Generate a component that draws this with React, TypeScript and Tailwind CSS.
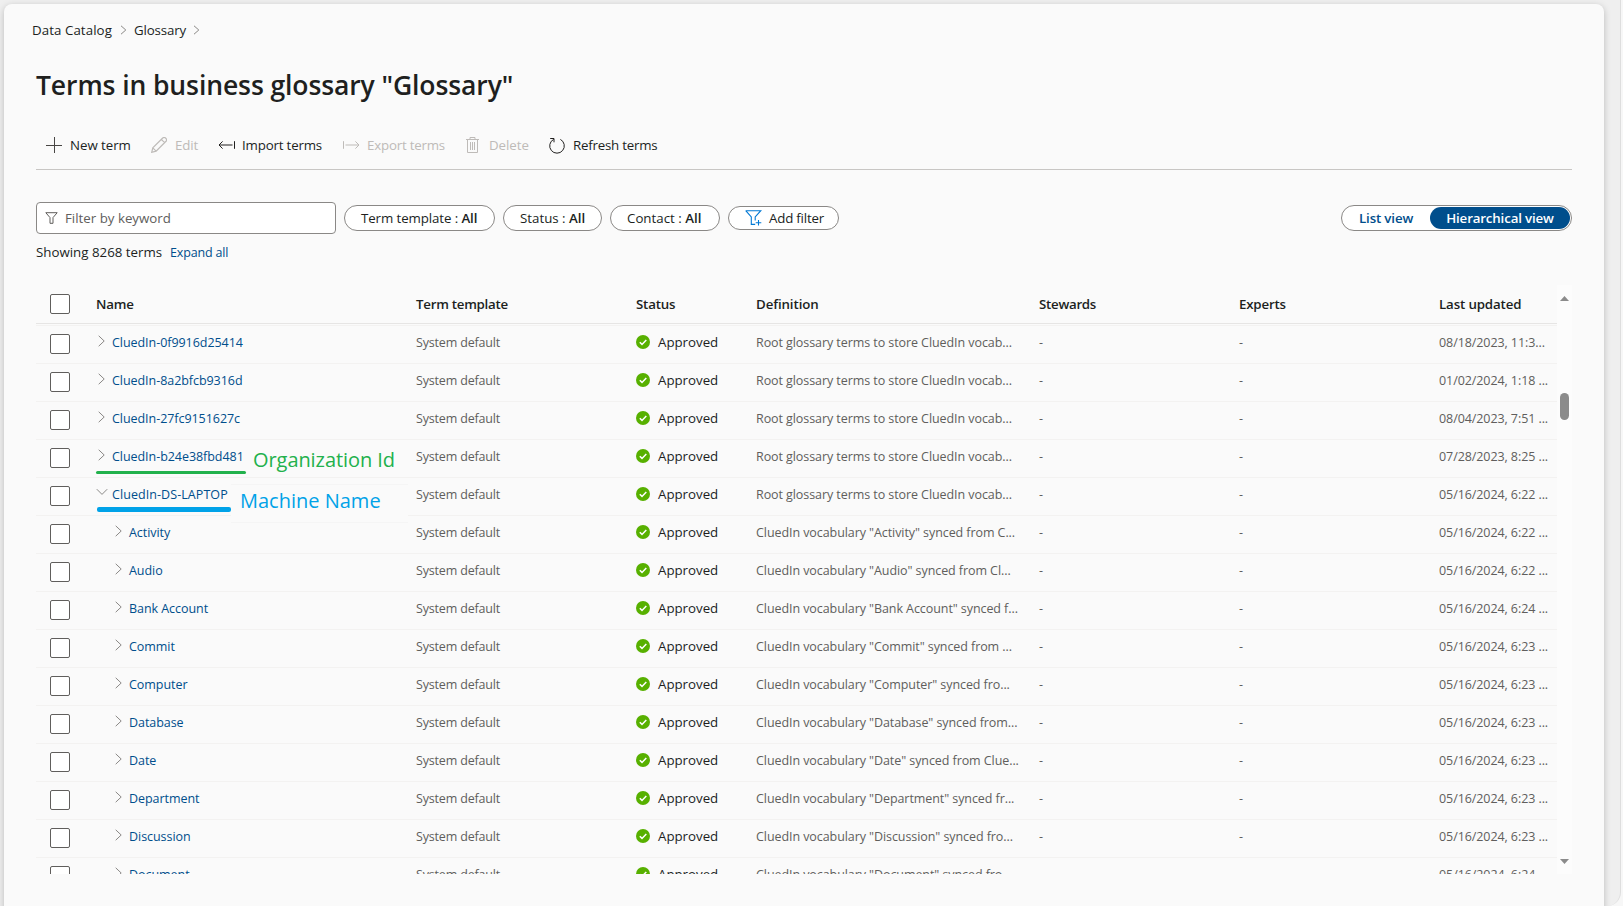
import type { ReactNode } from 'react';

type Term = { name: string; definition: string; updated: string; child?: boolean; open?: boolean };

const root = 'Root glossary terms to store CluedIn vocab...';

const terms: Term[] = [
  { name: 'CluedIn-0f9916d25414', definition: root, updated: '08/18/2023, 11:3...' },
  { name: 'CluedIn-8a2bfcb9316d', definition: root, updated: '01/02/2024, 1:18 ...' },
  { name: 'CluedIn-27fc9151627c', definition: root, updated: '08/04/2023, 7:51 ...' },
  { name: 'CluedIn-b24e38fbd481', definition: root, updated: '07/28/2023, 8:25 ...' },
  { name: 'CluedIn-DS-LAPTOP', definition: root, updated: '05/16/2024, 6:22 ...', open: true },
  { name: 'Activity', definition: 'CluedIn vocabulary "Activity" synced from C...', updated: '05/16/2024, 6:22 ...', child: true },
  { name: 'Audio', definition: 'CluedIn vocabulary "Audio" synced from Cl...', updated: '05/16/2024, 6:22 ...', child: true },
  { name: 'Bank Account', definition: 'CluedIn vocabulary "Bank Account" synced f...', updated: '05/16/2024, 6:24 ...', child: true },
  { name: 'Commit', definition: 'CluedIn vocabulary "Commit" synced from ...', updated: '05/16/2024, 6:23 ...', child: true },
  { name: 'Computer', definition: 'CluedIn vocabulary "Computer" synced fro...', updated: '05/16/2024, 6:23 ...', child: true },
  { name: 'Database', definition: 'CluedIn vocabulary "Database" synced from...', updated: '05/16/2024, 6:23 ...', child: true },
  { name: 'Date', definition: 'CluedIn vocabulary "Date" synced from Clue...', updated: '05/16/2024, 6:23 ...', child: true },
  { name: 'Department', definition: 'CluedIn vocabulary "Department" synced fr...', updated: '05/16/2024, 6:23 ...', child: true },
  { name: 'Discussion', definition: 'CluedIn vocabulary "Discussion" synced fro...', updated: '05/16/2024, 6:23 ...', child: true },
  { name: 'Document', definition: 'CluedIn vocabulary "Document" synced fro...', updated: '05/16/2024, 6:24 ...', child: true },
];

const grid = 'grid grid-cols-[60px_320px_220px_120px_283px_200px_200px_118px]';

function Icon({ w, h, className = '', children }: { w: number; h: number; className?: string; children: ReactNode }) {
  return (
    <svg width={w} height={h} viewBox={`0 0 ${w} ${h}`} fill="none" stroke="currentColor" className={`shrink-0 ${className}`}>
      {children}
    </svg>
  );
}

function Crumb({ className = '' }: { className?: string }) {
  return (
    <Icon w={7} h={10} className={`text-[#8a8886] ${className}`}>
      <path d="M1 0.8 5.8 5 1 9.2" />
    </Icon>
  );
}

function Checkbox() {
  return <span className="block size-5 rounded-xs border border-[#605e5c] bg-white" />;
}

function Pill({ label, className }: { label: string; className: string }) {
  return (
    <button className={`flex h-[26px] items-center rounded-full border border-[#8a8886] bg-white pl-4 whitespace-pre ${className}`}>
      {label} : <span className="font-semibold">All</span>
    </button>
  );
}

function Row({ term }: { term: Term }) {
  return (
    <div className={`${grid} h-[38px] border-b border-[#f3f2f1] text-[12.5px] leading-[34px] whitespace-nowrap text-[#605e5c]`}>
      <div className="pt-2 pl-3.5">
        <Checkbox />
      </div>
      <div className={`flex h-[34px] items-center ${term.child ? 'pl-[17px]' : ''}`}>
        <span className="flex w-4 justify-start text-[#8a8886]">
          {term.open ? (
            <Icon w={12} h={8} className="-mt-1.5">
              <path d="M0.8 1.2 6 6.4 11.2 1.2" />
            </Icon>
          ) : (
            <Icon w={10} h={12} className="-mt-1">
              <path d="M2.7 0.8 8.2 6 2.7 11.2" />
            </Icon>
          )}
        </span>
        <span className={`text-[#004e8c] ${term.open ? 'tracking-[0.07px]' : 'tracking-[-0.05px]'}`}>{term.name}</span>
      </div>
      <div className="tracking-[-0.17px]">System default</div>
      <div className="flex h-8 items-center gap-2 text-[13.3px] leading-8 tracking-[-0.02px] text-[#201f1e]">
        <Icon w={14} h={14} className="-mt-px">
          <circle cx="7" cy="7" r="7" fill="#57b000" stroke="none" />
          <path d="M3.8 7.3 6 9.4 10.3 4.9" stroke="#fff" strokeWidth="1.5" />
        </Icon>
        Approved
      </div>
      <div className="tracking-[-0.075px]">{term.definition}</div>
      <div>-</div>
      <div>-</div>
      <div className="tracking-[-0.08px]">{term.updated}</div>
    </div>
  );
}

export default function App() {
  return (
    <div className="h-[906px] w-full overflow-hidden bg-[#f7f7f7] font-['Open_Sans','Noto_Sans',sans-serif] text-[13.3px] leading-5 text-[#201f1e]">
      <div className="h-full w-[1621px] overflow-hidden rounded-br-[14px] border-r border-[#dedede] bg-[#efefef] pt-1 pl-1">
        <main className="h-[920px] w-[1600px] rounded-t-lg bg-[#fafafa] pt-4 pr-8 pl-8 shadow-[0_2px_7px_rgba(0,0,0,0.22)]">
          <nav className="-ml-1 flex h-5 items-center">
            <span className="w-20 tracking-[0.07px] whitespace-nowrap">Data Catalog</span>
            <Crumb className="ml-2" />
            <span className="ml-[7px] w-[52px] tracking-[-0.15px]">Glossary</span>
            <Crumb className="ml-[7px]" />
          </nav>

          <h1 className="mt-[27px] h-9 text-[26.5px] leading-9 font-[550] tracking-[-0.1px]">Terms in business glossary "Glossary"</h1>

          <div className="mt-[26px] flex h-[41px] items-start border-b border-[#c8c6c4] leading-8 whitespace-nowrap">
            <button className="ml-2.5 flex h-8 w-[105px] items-center gap-2 tracking-[-0.05px]">
              <Icon w={16} h={16}>
                <path d="M8.5 0v16M0 8.5h16" stroke="#484644" />
              </Icon>
              New term
            </button>
            <button className="flex h-8 w-[67px] items-center gap-2 tracking-[-0.15px] text-[#bebbb8]">
              <Icon w={16} h={16}>
                <path d="M0.7 15.3 1.8 10.9 11.7 1a1.9 1.9 0 0 1 2.8 0l.5.5a1.9 1.9 0 0 1 0 2.8L5.1 14.2ZM1.8 10.9l3.3 3.3M10.3 2.4l3.3 3.3" strokeWidth="1.2" />
              </Icon>
              Edit
            </button>
            <button className="flex h-8 w-[125px] items-center gap-[7px] tracking-[-0.17px]">
              <Icon w={17} h={10}>
                <path d="M16.5 1.2v7.6M14.5 5H1M4.6 1.4 1 5l3.6 3.6" />
              </Icon>
              Import terms
            </button>
            <button className="flex h-8 w-[122px] items-center gap-[7px] tracking-[-0.2px] text-[#bebbb8]">
              <Icon w={17} h={10}>
                <path d="M.5 1.2v7.6M2.5 5H16M12.4 1.4 16 5l-3.6 3.6" />
              </Icon>
              Export terms
            </button>
            <button className="flex h-8 w-[84px] items-center gap-[9px] tracking-[-0.05px] text-[#bebbb8]">
              <Icon w={15} h={16}>
                <path d="M1 2.5h13M5 2.5V.5h5v2M2.5 2.5v13h10v-13M5.5 5v8M7.5 5v8M9.5 5v8" />
              </Icon>
              Delete
            </button>
            <button className="flex h-8 items-center gap-2 tracking-[-0.22px]">
              <Icon w={16} h={17}>
                <path d="M4.6 2.4A7.3 7.3 0 1 0 11.4 2.4M1.2 1.5H5v3.8" />
              </Icon>
              Refresh terms
            </button>
          </div>

          <div className="mt-8 flex h-8 items-center whitespace-nowrap">
            <div className="flex h-8 w-[300px] items-center rounded-[4px] border border-[#8a8886] bg-white pl-2 text-[#605e5c]">
              <Icon w={13} h={12}>
                <path d="M.8.7h11.4L8 5.6v5.7H5V5.6Z" />
              </Icon>
              <span className="ml-[7px]">Filter by keyword</span>
            </div>
            <Pill label="Term template" className="ml-2 w-[151px] tracking-[-0.1px]" />
            <Pill label="Status" className="ml-2 w-[99px]" />
            <Pill label="Contact" className="ml-2 w-[110px]" />
            <button className="ml-2 flex h-6 w-[111px] items-center rounded-full border border-[#8a8886] bg-white pl-4 tracking-[-0.2px]">
              <Icon w={17} h={16} className="text-[#0078d4]">
                <path d="M.7.7h15.1L10.2 7v3.5M10.2 14.4H6.3V7L.7.7M13.5 10v5.6M10.7 12.8h5.6" strokeWidth="1.1" />
              </Icon>
              <span className="ml-[7px]">Add filter</span>
            </button>
            <div className="ml-auto flex h-[26px] w-[231px] items-center rounded-full border border-[#8a8886] bg-white font-semibold tracking-[-0.15px]">
              <span className="w-[88px] pl-[17px] text-[#004e8c]">List view</span>
              <span className="flex h-[22px] w-[140px] items-center justify-center rounded-full bg-[#004e8c] text-white">Hierarchical view</span>
            </div>
          </div>

          <div className="mt-2 flex h-5 items-center gap-2 whitespace-nowrap">
            <span>Showing 8268 terms</span>
            <span className="pt-0.5 text-[12.5px] tracking-[-0.17px] text-[#004e8c]">Expand all</span>
          </div>

          <div className="relative mt-[23px] flex h-[589px] overflow-hidden">
            <div className="w-[1521px]">
              <div className={`${grid} h-[39px] items-center border-b border-[#e6e5e4] font-semibold tracking-[-0.2px]`}>
                <div className="pl-3.5">
                  <Checkbox />
                </div>
                <div>Name</div>
                <div className="tracking-[-0.26px]">Term template</div>
                <div>Status</div>
                <div className="tracking-[-0.1px]">Definition</div>
                <div className="tracking-[-0.28px]">Stewards</div>
                <div>Experts</div>
                <div className="tracking-[-0.14px]">Last updated</div>
              </div>
              <div className="mt-px border-t border-[#f3f2f1]">
                {terms.map((t) => (
                  <Row key={t.name} term={t} />
                ))}
              </div>
            </div>

            <div className="flex w-[15px] flex-col items-center bg-[#fcfcfc]">
              <Icon w={9} h={5} className="mt-[11px]">
                <path d="M0 5 4.5 0 9 5Z" fill="#8b8b8b" stroke="none" />
              </Icon>
              <div className="mt-[92px] h-[27px] w-[9px] rounded-full bg-[#8b8b8b]" />
              <Icon w={9} h={5} className="mt-auto mb-2.5">
                <path d="M0 0 4.5 5 9 0Z" fill="#8b8b8b" stroke="none" />
              </Icon>
            </div>

            <div className="absolute top-[186px] left-[60px] h-[3px] w-[150px] rounded-full bg-[#22b14c]" />
            <div className="absolute top-[159px] left-[217px] text-[20px] leading-8 tracking-[-0.07px] whitespace-nowrap text-[#22b14c]">Organization Id</div>
            <div className="absolute top-[199px] left-[195px] h-[39px] w-[177px] border-y border-[#f5f5f5] bg-[#fafafa] pl-[9px] text-[20px] leading-8 whitespace-nowrap text-[#00a2e8]">
              Machine Name
            </div>
            <div className="absolute top-[222px] left-[61px] h-[5px] w-[134px] rounded-xs bg-[#00a2e8]" />
          </div>
        </main>
      </div>
    </div>
  );
}
